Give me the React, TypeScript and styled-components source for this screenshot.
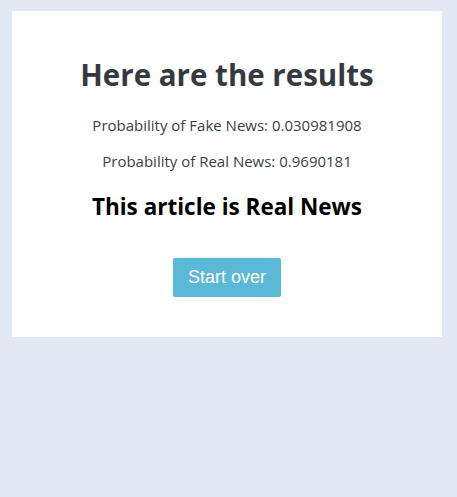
import React from "react";
import styled, { createGlobalStyle } from "styled-components";

const Global = createGlobalStyle`
  html, body { margin: 0; padding: 0; }
  body {
    background: #e2e9f5;
    font-family: "Open Sans", "Noto Sans", sans-serif;
    min-height: 497px;
  }
`;

const Page = styled.div`
  padding: 11px 15px 0 12px;
`;

const Card = styled.div`
  background: #ffffff;
  height: 326px;
  box-sizing: border-box;
  padding-top: 44px;
  display: flex;
  flex-direction: column;
  align-items: center;
  text-align: center;
`;

const Title = styled.h1`
  margin: 0;
  font-size: 29.5px;
  font-weight: 700;
  color: #343a40;
  line-height: 40px;
`;

const Prob = styled.p<{ $top: number }>`
  margin: ${(p) => p.$top}px 0 0;
  font-size: 15px;
  color: #3a3f44;
  line-height: 20px;
`;

const Verdict = styled.h3`
  margin: 21px 0 0;
  font-size: 22.5px;
  font-weight: 700;
  color: #000;
  line-height: 30px;
`;

const Button = styled.button`
  margin-top: 36px;
  width: 108px;
  height: 39px;
  background: #5bb8d6;
  border: none;
  border-radius: 2px;
  color: #fff;
  font-family: "Liberation Sans", Arial, sans-serif;
  font-size: 18px;
  cursor: pointer;
`;

export default function App() {
  return (
    <>
      <Global />
      <Page>
        <Card>
          <Title>Here are the results</Title>
          <Prob $top={20}>Probability of Fake News: 0.030981908</Prob>
          <Prob $top={16}>Probability of Real News: 0.9690181</Prob>
          <Verdict>This article is Real News</Verdict>
          <Button>Start over</Button>
        </Card>
      </Page>
    </>
  );
}
